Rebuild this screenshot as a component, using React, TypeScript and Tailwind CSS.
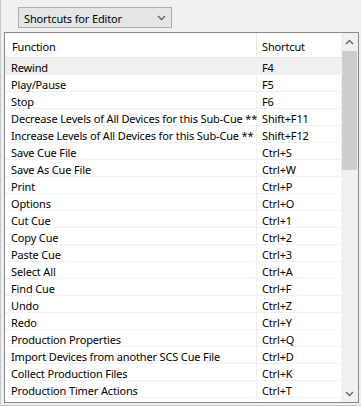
import React from 'react';

const rows: [string, string][] = [
  ['Rewind', 'F4'],
  ['Play/Pause', 'F5'],
  ['Stop', 'F6'],
  ['Decrease Levels of All Devices for this Sub-Cue **', 'Shift+F11'],
  ['Increase Levels of All Devices for this Sub-Cue **', 'Shift+F12'],
  ['Save Cue File', 'Ctrl+S'],
  ['Save As Cue File', 'Ctrl+W'],
  ['Print', 'Ctrl+P'],
  ['Options', 'Ctrl+O'],
  ['Cut Cue', 'Ctrl+1'],
  ['Copy Cue', 'Ctrl+2'],
  ['Paste Cue', 'Ctrl+3'],
  ['Select All', 'Ctrl+A'],
  ['Find Cue', 'Ctrl+F'],
  ['Undo', 'Ctrl+Z'],
  ['Redo', 'Ctrl+Y'],
  ['Production Properties', 'Ctrl+Q'],
  ['Import Devices from another SCS Cue File', 'Ctrl+D'],
  ['Collect Production Files', 'Ctrl+K'],
  ['Production Timer Actions', 'Ctrl+T'],
  ['', ''],
];

const Chevron: React.FC<{ up?: boolean; className?: string }> = ({ up, className }) => (
  <svg width="9" height="6" viewBox="0 0 9 6" className={className}>
    <path
      d={up ? 'M1 5 L4.5 1.5 L8 5' : 'M1 1 L4.5 4.5 L8 1'}
      fill="none"
      stroke="currentColor"
      strokeWidth="1.3"
    />
  </svg>
);

const App: React.FC = () => {
  return (
    <div
      className="w-[361px] h-[406px] bg-[#f0f0f0] border-l border-[#c8c8c8] border-b text-[11px] tracking-[-0.15px] text-black overflow-hidden"
      style={{ fontFamily: '"Noto Sans", "Liberation Sans", sans-serif' }}
    >
      {/* dropdown */}
      <div className="pt-[7px] pl-[17px] h-[32px]">
        <div className="w-[154px] h-[21px] bg-[#e5e5e5] border border-[#adadad] flex items-center justify-between pl-[5px] pr-[5px]">
          <span className="leading-none pt-[1px]">Shortcuts for Editor</span>
          <Chevron className="text-[#606060]" />
        </div>
      </div>

      {/* list */}
      <div className="ml-[3px] w-[355px] h-[371px] border border-[#828790] bg-white flex">
        <div className="flex-1 flex flex-col overflow-hidden">
          <div className="h-[25px] shrink-0 flex border-b border-[#e5e5e5]">
            <div className="w-[252px] pl-[7px] pt-[2px] flex items-center border-r border-[#e5e5e5] leading-none">Function</div>
            <div className="flex-1 pl-[5px] pt-[2px] flex items-center leading-none">Shortcut</div>
          </div>
          {rows.map(([fn, sc], i) => (
            <div
              key={i}
              className={`h-[17px] shrink-0 flex border-b border-[#f0f0f0] ${i === 0 ? 'bg-[#f0f0f0]' : ''}`}
            >
              <div className="w-[252px] pl-[6px] pt-[2px] flex items-center border-r border-[#f0f0f0] whitespace-nowrap leading-none">{fn}</div>
              <div className="flex-1 pl-[5px] pt-[2px] flex items-center whitespace-nowrap leading-none">{sc}</div>
            </div>
          ))}
        </div>
        {/* scrollbar */}
        <div className="w-[17px] shrink-0 bg-[#f0f0f0] flex flex-col">
          <div className="h-[18px] flex items-center justify-center text-[#606060]">
            <Chevron up />
          </div>
          <div className="mx-[1px] h-[119px] bg-[#cdcdcd]" />
          <div className="flex-1" />
          <div className="h-[17px] flex items-center justify-center text-[#606060]">
            <Chevron />
          </div>
        </div>
      </div>
    </div>
  );
};

export default App;
